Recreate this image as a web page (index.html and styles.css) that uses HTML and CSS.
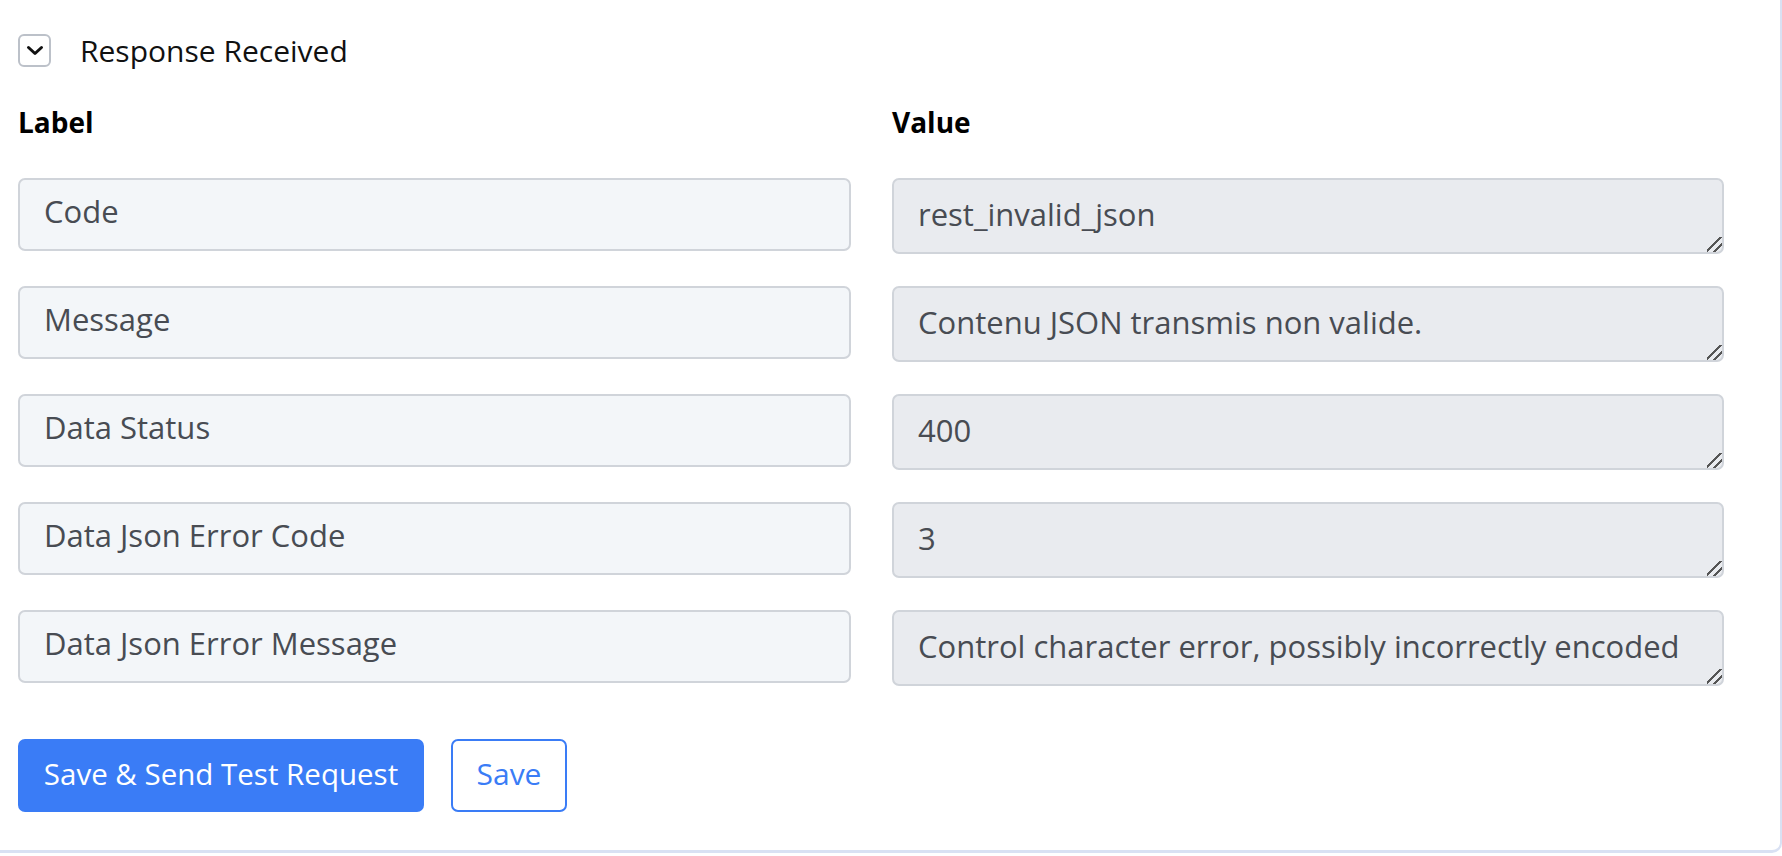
FILE: index.html
```html
<!DOCTYPE html>
<html lang="en">
  <head>
    <meta charset="UTF-8" />
    <meta name="viewport" content="width=device-width, initial-scale=1.0" />
    <title>Response Received</title>
    <link rel="stylesheet" href="styles.css">
  </head>
  <body>
    <div class="panel">
      <div class="panel-header">
        <button class="toggle" type="button" aria-label="Collapse">
          <svg width="18" height="11" viewBox="0 0 18 11">
            <path d="M2.5 2.5 L9 8.5 L15.5 2.5" fill="none" stroke="#111" stroke-width="3" stroke-linecap="round" stroke-linejoin="round" />
          </svg>
        </button>
        <span class="panel-title">Response Received</span>
      </div>

      <div class="fields">
        <div class="col-title">Label</div>
        <div class="col-title">Value</div>

        <input class="field-label" type="text" value="Code" />
        <textarea class="field-value" readonly>rest_invalid_json</textarea>

        <input class="field-label" type="text" value="Message" />
        <textarea class="field-value" readonly>Contenu JSON transmis non valide.</textarea>

        <input class="field-label" type="text" value="Data Status" />
        <textarea class="field-value" readonly>400</textarea>

        <input class="field-label" type="text" value="Data Json Error Code" />
        <textarea class="field-value" readonly>3</textarea>

        <input class="field-label" type="text" value="Data Json Error Message" />
        <textarea class="field-value" readonly>Control character error, possibly incorrectly encoded</textarea>
      </div>

      <div class="actions">
        <button class="btn btn-primary" type="button">Save &amp; Send Test Request</button>
        <button class="btn btn-outline" type="button">Save</button>
      </div>
    </div>
  </body>
</html>
```

FILE: styles.css
```css
body {
  margin: 0;
  background-color: #fff;
  font-family: "Open Sans", "Noto Sans", sans-serif;
}
.panel {
  box-sizing: border-box;
  width: 1782px;
  height: 853px;
  padding: 34px 56px 0 18px;
  background-color: #fff;
  border-right: 2px solid #d9e1f3;
  border-bottom: 3px solid #d9e1f3;
  border-bottom-right-radius: 10px;
}
.panel-header {
  display: flex;
  align-items: center;
  gap: 29px;
}
.toggle {
  display: flex;
  align-items: center;
  justify-content: center;
  width: 33px;
  height: 33px;
  padding: 0;
  background: #fff;
  border: 2px solid #bcc1c9;
  border-radius: 6px;
}
.panel-title {
  font-size: 30px;
  line-height: 32px;
  color: #111;
}
.fields {
  display: grid;
  grid-template-columns: 833px 832px;
  column-gap: 41px;
  row-gap: 32px;
  margin-top: 37px;
}
.col-title {
  font-size: 28px;
  line-height: 36px;
  font-weight: 700;
  color: #000;
  margin-bottom: 6px;
}
.field-label,
.field-value {
  box-sizing: border-box;
  width: 100%;
  margin: 0;
  font-family: inherit;
  font-size: 31px;
  font-weight: 500;
  color: #484c53;
  border: 2px solid #d0d4da;
  border-radius: 7px;
  outline: none;
}
.field-label {
  height: 73px;
  padding: 0 24px 8px;
  background-color: #f3f6f9;
}
.field-value {
  height: 76px;
  padding: 14px 24px 0;
  line-height: 40px;
  background-color: #e9ebef;
  overflow: hidden;
  white-space: nowrap;
}
/* two short strokes in the corner */
.field-value::-webkit-resizer {
  background: linear-gradient(
    135deg,
    transparent 42%,
    #555 42%,
    #555 52%,
    transparent 52%,
    transparent 68%,
    #555 68%,
    #555 78%,
    transparent 78%
  );
}
.actions {
  display: flex;
  gap: 27px;
  margin-top: 53px;
}
.btn {
  height: 73px;
  padding: 0 0 4px;
  font-family: inherit;
  font-weight: 500;
  border-radius: 7px;
  cursor: pointer;
}
.btn-primary {
  width: 406px;
  font-size: 29.5px;
  background-color: #3a7cf6;
  color: #fff;
  border: none;
}
.btn-outline {
  width: 116px;
  font-size: 30px;
  background-color: #fff;
  color: #3a7cf6;
  border: 2px solid #3a7cf6;
}
```
